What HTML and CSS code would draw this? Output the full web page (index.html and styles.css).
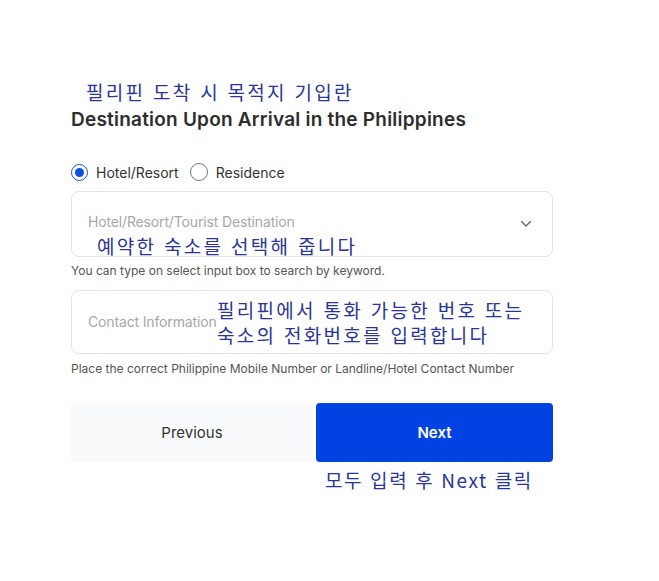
FILE: index.html
```html
<!DOCTYPE html>
<html lang="ko">
<head>
    <meta charset="UTF-8">
    <meta name="viewport" content="width=device-width, initial-scale=1.0">
    <title>Destination Upon Arrival</title>
    <link rel="stylesheet" href="styles.css">
</head>
<body>
    <div class="form">
        <div class="note note-title">필리핀 도착 시 목적지 기입란</div>
        <h2 class="heading">Destination Upon Arrival in the Philippines</h2>

        <div class="radios">
            <label class="radio checked"><span class="dot"></span>Hotel/Resort</label>
            <label class="radio"><span class="dot"></span>Residence</label>
        </div>

        <div class="field select">
            <span class="placeholder">Hotel/Resort/Tourist Destination</span>
            <svg class="chevron" width="12" height="8" viewBox="0 0 12 8">
                <path d="M1.5 1.5 L6 6 L10.5 1.5" fill="none" stroke="#666" stroke-width="1.4" stroke-linecap="round" stroke-linejoin="round"/>
            </svg>
            <div class="note note-select">예약한 숙소를 선택해 줍니다</div>
        </div>
        <p class="help">You can type on select input box to search by keyword.</p>

        <div class="field contact">
            <span class="placeholder">Contact Information</span>
            <div class="note note-contact">필리핀에서 통화 가능한 번호 또는<br>숙소의 전화번호를 입력합니다</div>
        </div>
        <p class="help">Place the correct Philippine Mobile Number or Landline/Hotel Contact Number</p>

        <div class="buttons">
            <button class="btn prev">Previous</button>
            <div class="next-col">
                <button class="btn next">Next</button>
                <div class="note note-next">모두 입력 후 Next 클릭</div>
            </div>
        </div>
    </div>
</body>
</html>
```

FILE: styles.css
```css
body {
    margin: 0;
    padding: 80px 0 0 71px;
    background-color: #fff;
    font-family: Inter, "Noto Sans", sans-serif;
    color: #333;
}
.form { width: 482px; }
.note {
    font-family: "Noto Sans CJK KR", sans-serif;
    font-size: 19px;
    line-height: 24px;
    letter-spacing: 2.3px;
    color: #2a3597;
    white-space: nowrap;
}
.note-title { padding-left: 15px; }
.heading {
    margin: 4px 0 0;
    font-size: 19px;
    line-height: 24px;
    font-weight: 600;
    color: #2d2d2d;
    letter-spacing: 0.22px;
}
.radios {
    display: flex;
    align-items: center;
    gap: 11px;
    margin-top: 30px;
    height: 20px;
}
.radio {
    display: flex;
    align-items: center;
    gap: 8px;
    font-size: 14px;
    color: #333;
}
.radio .dot {
    width: 16px;
    height: 16px;
    border: 1px solid #777;
    border-radius: 50%;
    box-sizing: content-box;
    position: relative;
}
.radio.checked .dot { border: 1.5px solid #1a56d6; width: 15px; height: 15px; }
.radio.checked .dot::after {
    content: "";
    position: absolute;
    left: 3px;
    top: 3px;
    width: 9px;
    height: 9px;
    border-radius: 50%;
    background-color: #0a4fe0;
}
.field {
    position: relative;
    display: flex;
    align-items: center;
    justify-content: space-between;
    border: 1px solid #e4e4e7;
    border-radius: 8px;
    padding: 0 20px 0 16px;
    box-sizing: border-box;
}
.select { margin-top: 9px; height: 66px; align-items: flex-start; padding-top: 21px; }
.select .chevron { margin-top: 7px; }
.contact { margin-top: 11px; height: 64px; }
.placeholder { font-size: 14px; color: #a8a8a8; line-height: 18px; letter-spacing: -0.15px; }
.note-select { position: absolute; left: 25px; top: 42px; }
.note-contact { position: absolute; left: 145px; top: 6px; line-height: 25px; }
.help {
    margin: 6px 0 0;
    font-size: 12px;
    line-height: 16px;
    color: #555;
}
.contact + .help { margin-top: 7px; }
.buttons {
    display: grid;
    grid-template-columns: 242px 1fr;
    gap: 3px;
    margin-top: 26px;
}
.btn {
    height: 59px;
    border: none;
    border-radius: 4px;
    font-family: Inter, "Noto Sans", sans-serif;
    font-size: 15px;
    cursor: pointer;
}
.prev { background-color: #f9fafc; color: #333; }
.next { width: 100%; background-color: #0042e2; color: #fff; font-weight: 600; }
.note-next { margin: 6px 0 0 9px; letter-spacing: 1.6px; }
```
